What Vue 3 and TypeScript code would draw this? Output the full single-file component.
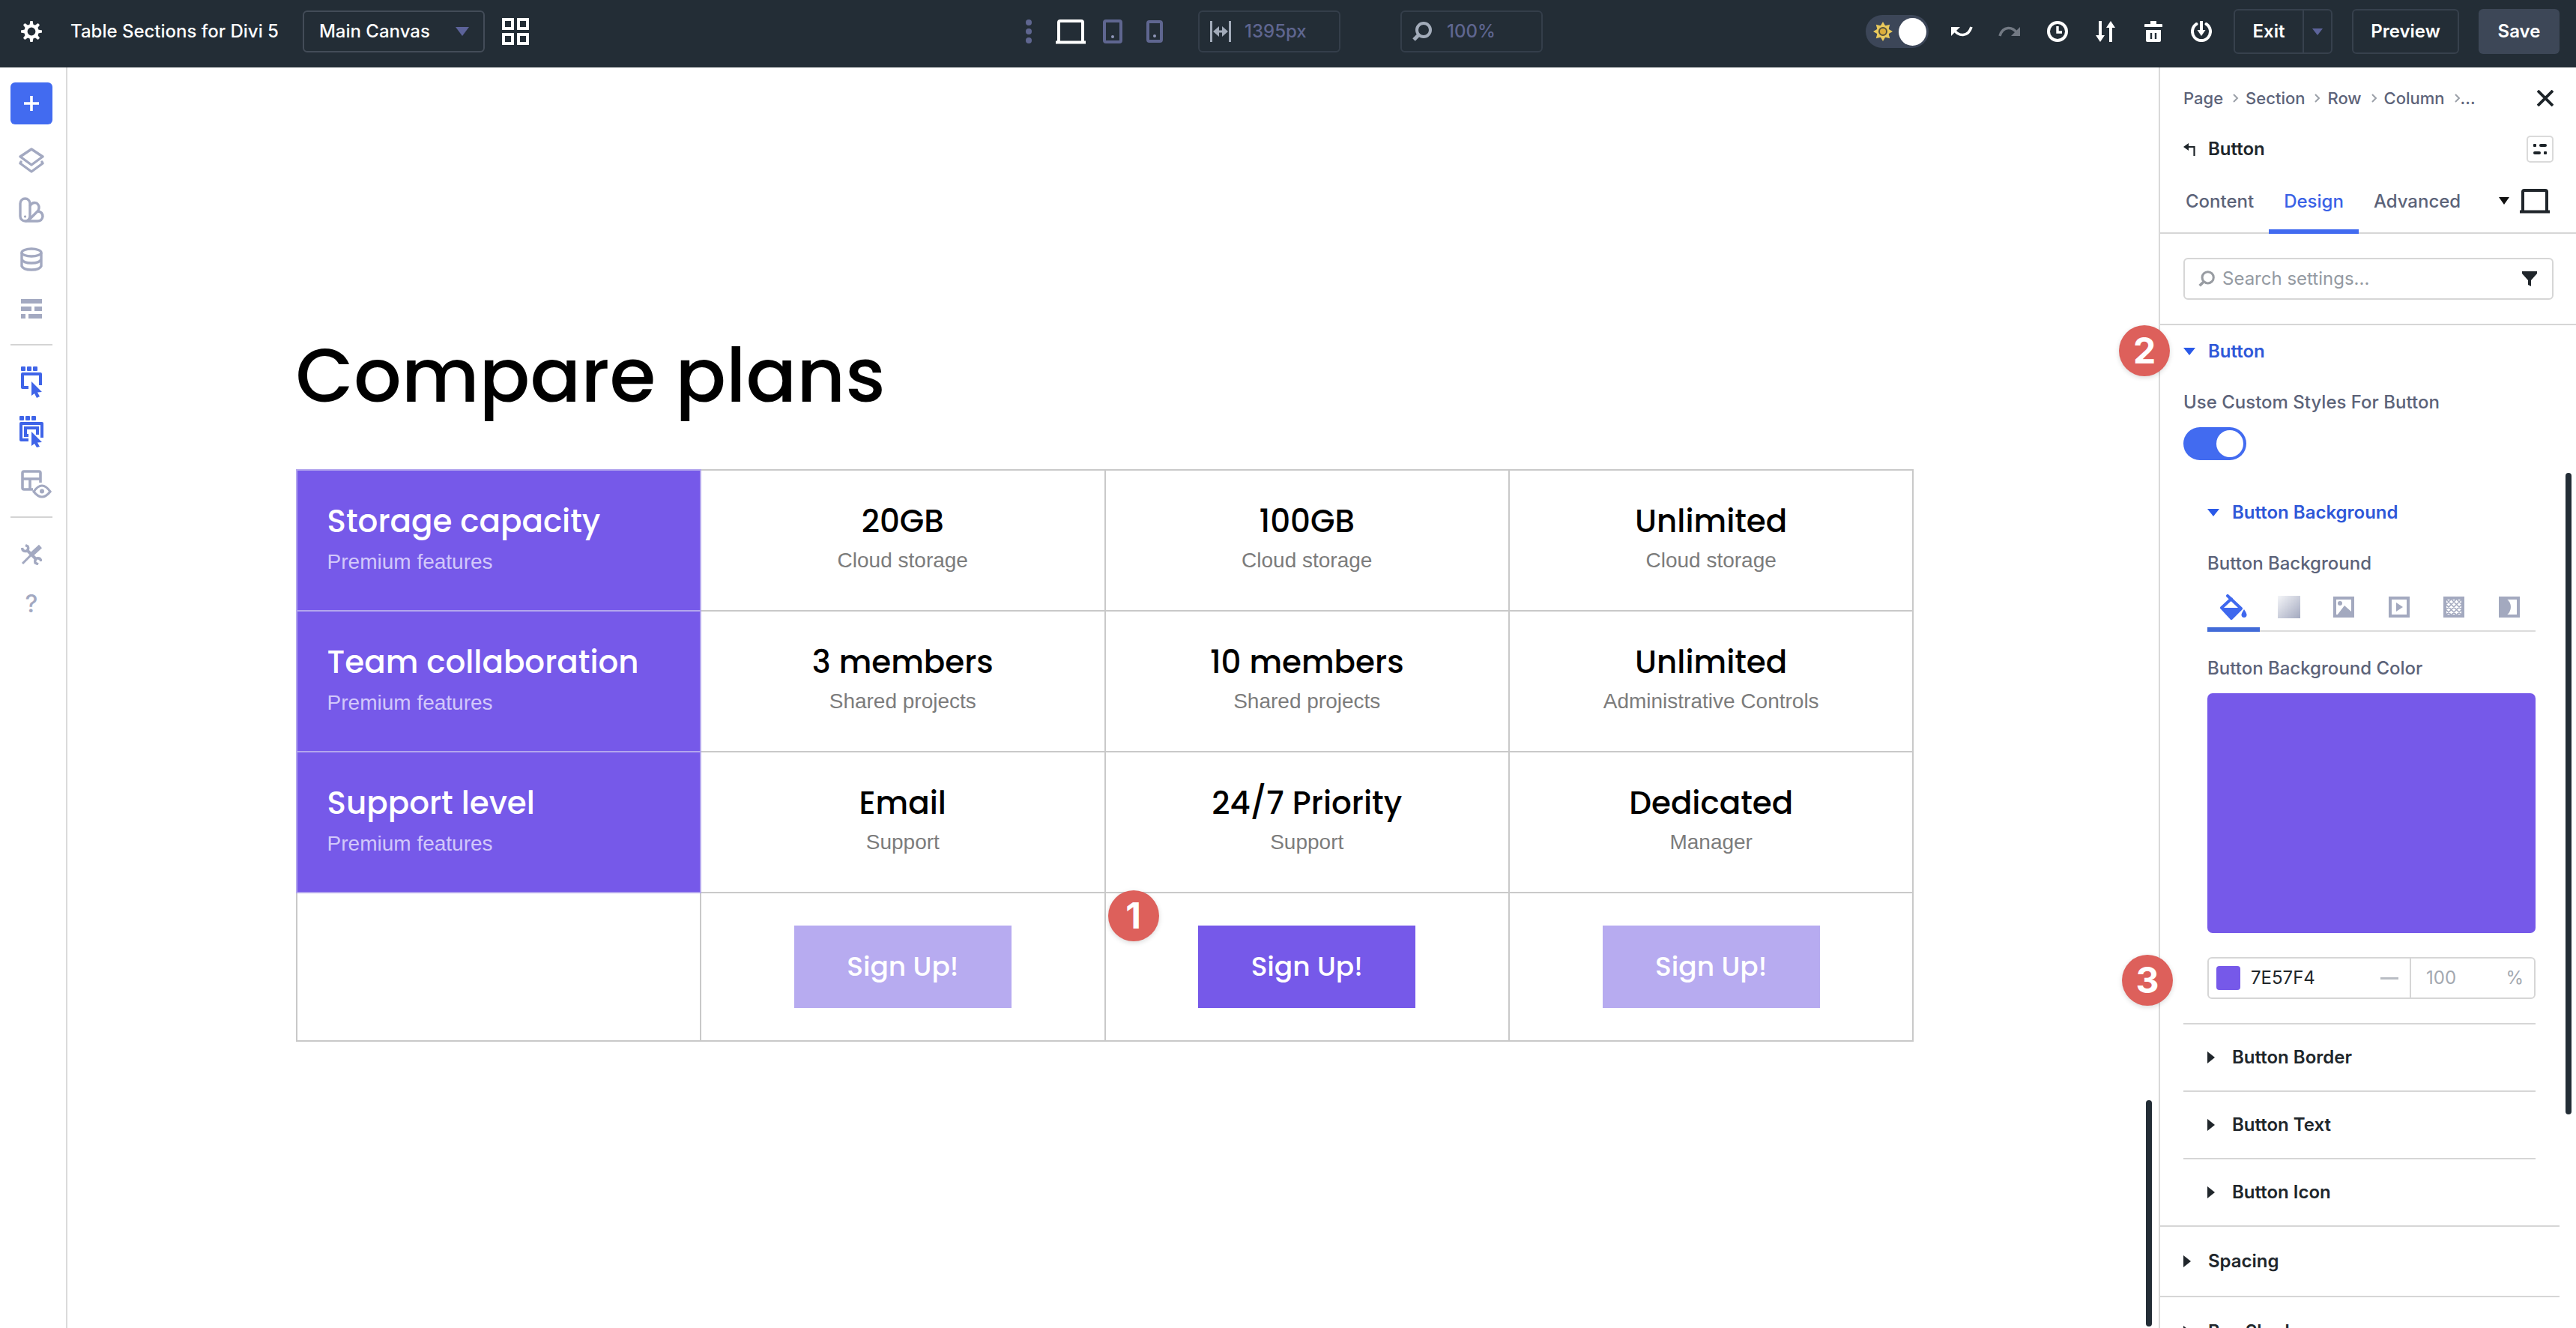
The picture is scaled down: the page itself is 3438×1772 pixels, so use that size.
<script setup lang="ts">
import { ref } from 'vue'

interface Cell {
  title: string
  note: string
}

interface PlanRow {
  feature: string
  cells: Cell[]
}

const rows: PlanRow[] = [
  {
    feature: 'Storage capacity',
    cells: [
      { title: '20GB', note: 'Cloud storage' },
      { title: '100GB', note: 'Cloud storage' },
      { title: 'Unlimited', note: 'Cloud storage' },
    ],
  },
  {
    feature: 'Team collaboration',
    cells: [
      { title: '3 members', note: 'Shared projects' },
      { title: '10 members', note: 'Shared projects' },
      { title: 'Unlimited', note: 'Administrative Controls' },
    ],
  },
  {
    feature: 'Support level',
    cells: [
      { title: 'Email', note: 'Support' },
      { title: '24/7 Priority', note: 'Support' },
      { title: 'Dedicated', note: 'Manager' },
    ],
  },
]

const crumbs: string[] = ['Page', 'Section', 'Row', 'Column']
const tabs: string[] = ['Content', 'Design', 'Advanced']
const subGroups: string[] = ['Button Border', 'Button Text', 'Button Icon']
const groups: string[] = ['Spacing', 'Box Shadow']

const activeTab = ref('Design')
const lightMode = ref(true)
const customStyles = ref(true)
const canvas = ref('Main Canvas')
const viewport = ref('1395px')
const zoom = ref('100%')
const search = ref('')
const hex = ref('7E57F4')
const opacity = ref('')
</script>

<template>
  <div class="app">
    <header class="topbar">
      <div class="top-left">
        <button class="plain" aria-label="Settings">
          <svg width="28" height="28" viewBox="0 0 28 28">
            <g fill="#fff">
              <path v-for="n in 8" :key="n" d="M11.5 5 L12.4 0 H15.6 L16.5 5 Z" :transform="`rotate(${n * 45} 14 14)`" />
            </g>
            <circle cx="14" cy="14" r="7.6" fill="none" stroke="#fff" stroke-width="4.4" />
          </svg>
        </button>
        <span class="doc-title">Table Sections for Divi 5</span>
        <div class="select-wrap">
          <select v-model="canvas" aria-label="Canvas">
            <option>Main Canvas</option>
          </select>
          <svg width="18" height="12" viewBox="0 0 18 12"><path d="M0 0H18L9 12Z" fill="#5c639a" /></svg>
        </div>
        <button class="plain" aria-label="Grid view">
          <svg width="38" height="38" viewBox="0 0 38 38" fill="none" stroke="#fff" stroke-width="4">
            <rect x="3" y="3" width="12" height="12" /><rect x="23" y="3" width="12" height="12" />
            <rect x="3" y="23" width="12" height="12" /><rect x="23" y="23" width="12" height="12" />
          </svg>
        </button>
      </div>

      <div class="top-center">
        <button class="plain slot" aria-label="More">
          <svg width="8" height="32" viewBox="0 0 8 32" fill="#5f6690"><circle cx="4" cy="4" r="4" /><circle cx="4" cy="16" r="4" /><circle cx="4" cy="28" r="4" /></svg>
        </button>
        <button class="plain slot" aria-label="Desktop">
          <svg width="40" height="34" viewBox="0 0 40 34" fill="none" stroke="#fff"><path d="M4 30V5Q4 3 6 3H34Q36 3 36 5V30" stroke-width="4" /><path d="M0 31.5H40" stroke-width="4" /></svg>
        </button>
        <button class="plain slot" aria-label="Tablet">
          <svg width="26" height="32" viewBox="0 0 26 32"><rect x="2" y="2" width="22" height="28" rx="2" fill="none" stroke="#5f6690" stroke-width="4" /><circle cx="13" cy="23" r="2" fill="#8f96b8" /></svg>
        </button>
        <button class="plain slot" aria-label="Phone">
          <svg width="22" height="30" viewBox="0 0 22 30"><rect x="2" y="2" width="18" height="26" rx="2" fill="none" stroke="#5f6690" stroke-width="4" /><circle cx="11" cy="21" r="2" fill="#8f96b8" /></svg>
        </button>
        <label class="top-field width-field">
          <svg width="28" height="28" viewBox="0 0 28 28" stroke="#a3acba" fill="#a3acba"><path d="M1.5 0V28M26.5 0V28M8 14H20" stroke-width="3" fill="none" /><path d="M4 14L12 7V21ZM24 14L16 7V21Z" stroke="none" /></svg>
          <input v-model="viewport" type="text" aria-label="Viewport width" />
        </label>
        <label class="top-field zoom-field">
          <svg width="28" height="26" viewBox="0 0 28 26" fill="none" stroke="#a3acba"><circle cx="15" cy="11" r="9" stroke-width="4" /><path d="M8 18L2 24" stroke-width="5" /></svg>
          <input v-model="zoom" type="text" aria-label="Zoom" />
        </label>
      </div>

      <div class="top-right">
        <label class="mode">
          <input v-model="lightMode" type="checkbox" aria-label="Light mode" />
          <svg width="26" height="26" viewBox="0 0 26 26">
            <g fill="#e9c95c"><path v-for="n in 8" :key="n" d="M9.5 6L13 0L16.5 6Z" :transform="`rotate(${n * 45} 13 13)`" /></g>
            <circle cx="13" cy="13" r="8.5" fill="#e9c95c" /><circle cx="13" cy="13" r="5" fill="#dcae3c" stroke="#55503c" stroke-width="2" />
          </svg>
        </label>
        <button class="plain tool" aria-label="Undo">
          <svg width="30" height="14" viewBox="0 0 30 14"><path d="M1 1V13L13 1Z" fill="#fff" /><path d="M28 1Q25 11 17 11.500Q10 12 5 5" fill="none" stroke="#fff" stroke-width="3.600" /></svg>
        </button>
        <button class="plain tool" aria-label="Redo">
          <svg width="30" height="14" viewBox="0 0 30 14"><path d="M29 1V13H17Z" fill="#727983" /><path d="M2 13Q5 3 13 2.500Q20 2 25 9" fill="none" stroke="#727983" stroke-width="3.600" /></svg>
        </button>
        <button class="plain tool" aria-label="History">
          <svg width="28" height="28" viewBox="0 0 28 28" fill="none" stroke="#fff"><circle cx="14" cy="14" r="12" stroke-width="4" /><path d="M14 7V15H20" stroke-width="3.400" /></svg>
        </button>
        <button class="plain tool" aria-label="Portability">
          <svg width="28" height="28" viewBox="0 0 28 28"><path d="M7 0V22M21 6V28" stroke="#fff" stroke-width="4" /><path d="M1 19H13L7 28ZM15 9H27L21 0Z" fill="#fff" /></svg>
        </button>
        <button class="plain tool" aria-label="Clear layout">
          <svg width="26" height="28" viewBox="0 0 26 28"><path d="M9 0H17V4H24Q25 4 25 5V8H1V5Q1 4 2 4H9ZM3 12H23V26Q23 28 21 28H5Q3 28 3 26Z" fill="#fff" /><path d="M10 16V24M16 16V24" stroke="#232d36" stroke-width="2.400" /></svg>
        </button>
        <button class="plain tool" aria-label="Save to library">
          <svg width="28" height="28" viewBox="0 0 28 28"><path d="M7.500 4A12 12 0 1 0 20.500 4" fill="none" stroke="#fff" stroke-width="4" stroke-linecap="round" /><path d="M14 0V14" stroke="#fff" stroke-width="4" /><path d="M8.500 12H19.500L14 20Z" fill="#fff" /></svg>
        </button>
        <div class="split">
          <button class="exit">Exit</button>
          <button class="exit-menu" aria-label="Exit options">
            <svg width="14" height="9" viewBox="0 0 14 9"><path d="M0 0H14L7 9Z" fill="#5c639a" /></svg>
          </button>
        </div>
        <button class="box-btn preview">Preview</button>
        <button class="box-btn save">Save</button>
      </div>
    </header>

    <div class="body">
      <nav class="sidebar" aria-label="Builder tools">
        <button class="add" aria-label="Add">
          <svg width="20" height="20" viewBox="0 0 20 20" stroke="#fff" stroke-width="3.600"><path d="M10 0V20M0 10H20" /></svg>
        </button>
        <button class="plain side" aria-label="Layers">
          <svg width="34" height="34" viewBox="0 0 34 34" fill="none" stroke="#a3a9c1" stroke-width="3.400" stroke-linejoin="round" stroke-linecap="round"><path d="M17 2L32 12L17 23L2 12Z" /><path d="M3 19L2 21L17 32L32 21L31 19" /></svg>
        </button>
        <button class="plain side" aria-label="Design presets">
          <svg width="34" height="34" viewBox="0 0 34 34" fill="none" stroke="#a3a9c1" stroke-width="3.400" stroke-linejoin="round"><rect x="2" y="2" width="13" height="30" rx="6.500" /><path d="M15 12Q18 6 24 8Q29 12 26 18L13 31" /><path d="M26 19Q32 20 32 26Q31 32 25 32H9" /><circle cx="8.500" cy="26" r="1.200" fill="#a3a9c1" stroke-width="1" /></svg>
        </button>
        <button class="plain side" aria-label="Data">
          <svg width="30" height="32" viewBox="0 0 30 32" fill="none" stroke="#a3a9c1" stroke-width="3.400"><ellipse cx="15" cy="7" rx="13" ry="5" /><path d="M2 7V25Q4 30 15 30T28 25V7M2 16Q4 21 15 21T28 16" /></svg>
        </button>
        <button class="plain side" aria-label="Structure">
          <svg width="28" height="26" viewBox="0 0 28 26" fill="#a3a9c1"><rect width="28" height="6" /><rect y="10" width="14" height="6" /><rect x="18" y="10" width="10" height="6" /><rect y="20" width="6" height="6" /><rect x="10" y="20" width="18" height="6" /></svg>
        </button>
        <hr />
        <button class="plain side" aria-label="Select element">
          <svg width="28" height="42" viewBox="0 0 28 42" fill="#3f64e8"><rect width="6" height="6" rx="1" /><rect x="8" width="6" height="6" rx="1" /><rect x="16" width="6" height="6" rx="1" /><path d="M10 28H2V10H26V25" fill="none" stroke="#3f64e8" stroke-width="4" stroke-linejoin="round" /><path d="M14 20L28 34L22 34.500L25 40L21 42L18 36L14 39Z" /></svg>
        </button>
        <button class="plain side" aria-label="Select nested element">
          <svg width="32" height="42" viewBox="0 0 32 42" fill="#3f64e8"><rect width="6" height="6" rx="1" /><rect x="8" width="6" height="6" rx="1" /><rect x="16" width="6" height="6" rx="1" /><path d="M12 32H2V10H30V29" fill="none" stroke="#3f64e8" stroke-width="4" stroke-linejoin="round" /><path d="M12 26H8V16H24V25" fill="none" stroke="#3f64e8" stroke-width="4" /><path d="M16 21L30 35L24 35.500L27 41L23 42L20 37L16 40Z" /></svg>
        </button>
        <button class="plain side" aria-label="View mode">
          <svg class="overflowing" width="28" height="34" viewBox="0 0 28 34" fill="none" stroke="#a3a9c1" stroke-width="3.600"><path d="M16 28H4Q2 28 2 26V6Q2 4 4 4H24Q26 4 26 6V19M2 14H26M12 14V28" /><path d="M17 31Q28 15 39 31Q28 45 17 31Z" fill="#fff" stroke-width="3.200" /><circle cx="28" cy="30.500" r="3" fill="#a3a9c1" stroke="none" /></svg>
        </button>
        <hr />
        <button class="plain side" aria-label="Tools">
          <svg width="28" height="28" viewBox="0 0 28 28" fill="none" stroke="#a3a9c1"><path d="M2 26L14 14" stroke-width="3" /><path d="M14 14L26 3" stroke-width="6" /><path d="M8 8L21 21" stroke-width="4" /><path d="M1.500 5Q2 10 7 9.500Q11 7 9 3L6 1.500M27 23Q26 18 21 19Q18 21 19 25L23 27" stroke-width="3.400" /></svg>
        </button>
        <button class="plain side help" aria-label="Help">?</button>
      </nav>

      <main class="canvas">
        <div class="page">
          <div class="content">
            <h1>Compare plans</h1>
            <table>
              <tbody>
                <tr v-for="row in rows" :key="row.feature" class="plan-row">
                  <th scope="row">
                    <div class="cell-title">{{ row.feature }}</div>
                    <div class="cell-note">Premium features</div>
                  </th>
                  <td v-for="(cell, i) in row.cells" :key="i">
                    <div class="cell-title">{{ cell.title }}</div>
                    <div class="cell-note">{{ cell.note }}</div>
                  </td>
                </tr>
                <tr class="action-row">
                  <td></td>
                  <td><button class="signup faded">Sign Up!</button></td>
                  <td><button class="signup">Sign Up!</button><span class="badge badge-one">1</span></td>
                  <td><button class="signup faded">Sign Up!</button></td>
                </tr>
              </tbody>
            </table>
          </div>
        </div>
        <div class="gutter canvas-gutter"><div class="thumb"></div></div>
      </main>

      <aside class="panel">
        <div class="crumb-row">
          <nav class="crumbs" aria-label="Breadcrumb">
            <template v-for="crumb in crumbs" :key="crumb">
              <a href="#">{{ crumb }}</a>
              <svg width="8" height="14" viewBox="0 0 8 14" fill="none" stroke="#9ba0a8" stroke-width="2"><path d="M1 2L6 7L1 12" /></svg>
            </template>
            <span>...</span>
          </nav>
          <button class="plain" aria-label="Close">
            <svg width="22" height="22" viewBox="0 0 22 22" stroke="#1d2429" stroke-width="3.800"><path d="M1 1L21 21M21 1L1 21" /></svg>
          </button>
        </div>

        <div class="name-row">
          <button class="plain back" aria-label="Back">
            <svg width="16" height="17" viewBox="0 0 16 17"><path d="M4 5H14.500V17" fill="none" stroke="#1d2429" stroke-width="2.200" /><path d="M0 5L7 0V10Z" fill="#1d2429" /></svg>
          </button>
          <h2>Button</h2>
          <button class="layout-btn" aria-label="Panel layout">
            <svg width="18" height="16" viewBox="0 0 18 16" fill="#1d2429"><rect y="1" width="4" height="4" rx="1" /><rect x="8" y="1" width="10" height="4" rx="2" /><rect y="11" width="10" height="4" rx="2" /><rect x="14" y="11" width="4" height="4" rx="1" /></svg>
          </button>
        </div>

        <div class="tab-row">
          <div class="tabs" role="tablist">
            <button
              v-for="tab in tabs"
              :key="tab"
              role="tab"
              class="tab"
              :class="{ active: tab === activeTab }"
              :aria-selected="tab === activeTab"
              @click="activeTab = tab"
            >{{ tab }}</button>
          </div>
          <button class="plain device" aria-label="Responsive view">
            <svg width="14" height="10" viewBox="0 0 14 10"><path d="M0 0H14L7 10Z" fill="#111" /></svg>
            <svg width="40" height="34" viewBox="0 0 40 34" fill="none" stroke="#20262b"><path d="M4 30V5Q4 3 6 3H34Q36 3 36 5V30" stroke-width="4" /><path d="M0 31.500H40" stroke-width="4" /></svg>
          </button>
        </div>

        <div class="search-row">
          <label class="search">
            <svg width="22" height="22" viewBox="0 0 26 26" fill="none" stroke="#989ca2"><circle cx="15" cy="11" r="9" stroke-width="3.600" /><path d="M8 18L2 24" stroke-width="4.400" /></svg>
            <input v-model="search" type="text" placeholder="Search settings..." aria-label="Search settings" />
            <svg width="20" height="20" viewBox="0 0 20 20"><path d="M0 0H20V3L12 12V20L8 18V12L0 3Z" fill="#20262b" /></svg>
          </label>
        </div>

        <div class="scroller">
          <span class="badge badge-two">2</span>
          <div class="settings">
            <section class="group open-group">
              <button class="group-head open">
                <svg width="16" height="10" viewBox="0 0 16 10"><path d="M0 0H16L8 10Z" fill="#2a59e8" /></svg>
                Button
              </button>
              <label class="field-label" for="custom-styles">Use Custom Styles For Button</label>
              <input id="custom-styles" v-model="customStyles" class="switch" type="checkbox" />

              <div class="subgroup">
                <button class="group-head open nested-head">
                  <svg width="16" height="10" viewBox="0 0 16 10"><path d="M0 0H16L8 10Z" fill="#2a59e8" /></svg>
                  Button Background
                </button>
                <div class="field-label">Button Background</div>
                <div class="bg-tabs">
                  <button class="bg-tab active" aria-label="Color">
                    <svg width="36" height="34" viewBox="0 0 36 34"><path d="M10 2L28 19L15 32L2 18L15 6" fill="none" stroke="#3f68ee" stroke-width="4" stroke-linejoin="round" stroke-linecap="round" /><path d="M2 18H28L15 32Z" fill="#3f68ee" /><path d="M32 20Q28 26 28.500 28Q29 31 32 31T35.500 28Q36 26 32 20Z" fill="#3f68ee" /></svg>
                  </button>
                  <button class="bg-tab" aria-label="Gradient">
                    <svg width="30" height="30" viewBox="0 0 30 30"><defs><linearGradient id="fade" x1="0" y1="0" x2="1" y2="1"><stop offset="0" stop-color="#f4f5f8" /><stop offset="1" stop-color="#a3a9bf" /></linearGradient></defs><rect width="30" height="30" fill="url(#fade)" /></svg>
                  </button>
                  <button class="bg-tab" aria-label="Image">
                    <svg width="28" height="28" viewBox="0 0 28 28"><rect x="2" y="2" width="24" height="24" fill="none" stroke="#a3a9bf" stroke-width="4" /><circle cx="9" cy="9" r="3" fill="#a3a9bf" /><path d="M5 25L15 12L24 20V26H5Z" fill="#a3a9bf" /></svg>
                  </button>
                  <button class="bg-tab" aria-label="Video">
                    <svg width="28" height="28" viewBox="0 0 28 28"><rect x="2" y="2" width="24" height="24" fill="none" stroke="#a3a9bf" stroke-width="4" /><path d="M10 8L19 14L10 20Z" fill="#a3a9bf" /></svg>
                  </button>
                  <button class="bg-tab" aria-label="Pattern">
                    <svg width="28" height="28" viewBox="0 0 28 28"><rect x="2" y="2" width="24" height="24" fill="none" stroke="#a3a9bf" stroke-width="4" /><path d="M4 10L10 4M4 17L17 4M4 24L24 4M11 24L24 11M18 24L24 18M18 4L24 10M11 4L24 17M4 4L24 24M4 11L17 24M4 18L10 24" stroke="#a3a9bf" stroke-width="1.600" /></svg>
                  </button>
                  <button class="bg-tab" aria-label="Mask">
                    <svg width="28" height="28" viewBox="0 0 28 28"><rect x="2" y="2" width="24" height="24" fill="none" stroke="#a3a9bf" stroke-width="4" /><path d="M2 2H9Q16 7 16 14T9 26H2Z" fill="#a3a9bf" /></svg>
                  </button>
                </div>
                <div class="field-label">Button Background Color</div>
                <button class="swatch" aria-label="Pick color"></button>
                <div class="color-field">
                  <span class="badge badge-three">3</span>
                  <span class="chip"></span>
                  <input v-model="hex" class="hex" type="text" aria-label="Hex color" />
                  <span class="dash"></span>
                  <label class="opacity">
                    <input v-model="opacity" type="text" placeholder="100" aria-label="Opacity" />
                    <span>%</span>
                  </label>
                </div>
              </div>

              <button v-for="name in subGroups" :key="name" class="group-head sub-head">
                <svg width="10" height="16" viewBox="0 0 10 16"><path d="M0 0L10 8L0 16Z" fill="#20262b" /></svg>
                {{ name }}
              </button>
            </section>
            <button v-for="name in groups" :key="name" class="group-head main-head">
              <svg width="10" height="16" viewBox="0 0 10 16"><path d="M0 0L10 8L0 16Z" fill="#20262b" /></svg>
              {{ name }}
            </button>
          </div>
          <div class="gutter panel-gutter"><div class="thumb"></div></div>
        </div>
      </aside>
    </div>
  </div>
</template>

<style>
body {
  margin: 0;
}
</style>

<style scoped>
* {
  box-sizing: border-box;
}

.app {
  display: flex;
  flex-direction: column;
  height: 100vh;
  overflow: hidden;
  background: #fff;
  font-family: Inter, 'Liberation Sans', sans-serif;
  font-size: 24px;
  font-weight: 500;
  line-height: 30px;
  color: #20262b;
}

svg {
  display: block;
  flex: none;
}

button,
input,
select {
  font: inherit;
  color: inherit;
}

input {
  min-width: 0;
  padding: 0;
  border: 0;
  background: none;
  outline: none;
}

button {
  display: flex;
  align-items: center;
  justify-content: center;
  padding: 0;
  border: 0;
  background: none;
  cursor: pointer;
}

/* Top bar */
.topbar {
  display: grid;
  grid-template-columns: 1fr auto 1fr;
  align-items: center;
  flex: none;
  height: 90px;
  padding: 0 22px 6px 28px;
  background: #232d36;
  color: #fff;
}

.top-left,
.top-center,
.top-right {
  display: flex;
  align-items: center;
}

.top-center {
  padding-right: 40px;
}

.top-right {
  justify-content: flex-end;
}

.doc-title {
  margin: 0 32px 0 38px;
  white-space: nowrap;
}

.select-wrap {
  display: grid;
  align-items: center;
  width: 243px;
  height: 56px;
  margin-right: 22px;
  border: 2px solid #434c58;
  border-radius: 6px;
}

.select-wrap > * {
  grid-area: 1 / 1;
}

.select-wrap select {
  width: 100%;
  height: 100%;
  padding: 0 20px;
  border: 0;
  background: transparent;
  appearance: none;
}

.select-wrap option {
  color: #20262b;
}

.select-wrap svg {
  justify-self: end;
  margin-right: 19px;
  pointer-events: none;
}

.slot {
  width: 56px;
  height: 56px;
}

.top-field {
  display: flex;
  align-items: center;
  width: 190px;
  height: 56px;
  padding-left: 14px;
  border: 2px solid #343e4a;
  border-radius: 6px;
  color: #5f6690;
}

.top-field input {
  flex: 1;
  margin-left: 18px;
}

.width-field {
  margin-left: 30px;
}

.zoom-field {
  margin-left: 80px;
}

.mode {
  display: grid;
  align-items: center;
  margin-right: 12px;
}

.mode > * {
  grid-area: 1 / 1;
}

.mode input {
  display: flex;
  align-items: center;
  justify-content: flex-start;
  width: 84px;
  height: 44px;
  margin: 0;
  padding: 0 3px;
  border-radius: 22px;
  background: #3c4658;
  appearance: none;
}

.mode input::before {
  width: 37px;
  height: 37px;
  border-radius: 50%;
  background: #fff;
  content: '';
}

.mode input:checked {
  justify-content: flex-end;
}

.mode svg {
  margin-left: 10px;
}

.tool {
  width: 64px;
  height: 56px;
}

.split {
  display: flex;
  height: 60px;
  margin: 0 26px 0 11px;
  border: 2px solid #37414d;
  border-radius: 6px;
}

.exit {
  width: 92px;
  border-right: 2px solid #37414d;
}

.exit-menu {
  width: 36px;
}

.box-btn,
.exit {
  font-weight: 600;
}

.box-btn {
  height: 60px;
  border-radius: 6px;
}

.preview {
  width: 143px;
  margin-right: 26px;
  border: 2px solid #37414d;
}

.save {
  width: 108px;
  background: #3d4757;
}

/* Workspace */
.body {
  display: flex;
  flex: 1;
  min-height: 0;
}

.sidebar {
  display: flex;
  flex-direction: column;
  align-items: center;
  flex: none;
  width: 90px;
  padding: 20px 4px 0 0;
  border-right: 2px solid #dadada;
}

.add {
  flex: none;
  width: 56px;
  height: 56px;
  margin-bottom: 15px;
  border-radius: 6px;
  background: #426bf0;
}

.side {
  flex: none;
  width: 84px;
  height: 66px;
}

.overflowing {
  overflow: visible;
}

.help {
  font-size: 32px;
  color: #a3a9c1;
}

.sidebar hr {
  width: 56px;
  height: 2px;
  margin: 14px 0 16px;
  border: 0;
  background: #d4d4d4;
}

.canvas {
  display: flex;
  flex: 1;
  min-width: 0;
}

.page {
  flex: 1;
  padding-top: 336px;
}

.content {
  width: 78%;
  margin: 0 auto;
}

.page h1,
.cell-title,
.signup {
  font-family: Poppins, Inter, sans-serif;
}

.page h1 {
  margin: 0 0 50px;
  font-size: 100px;
  font-weight: 500;
  line-height: 150px;
  color: #000;
}

table {
  width: 100%;
  border-collapse: collapse;
  table-layout: fixed;
}

th,
td {
  padding: 0;
  border: 2px solid #c9c9c9;
  text-align: center;
  vertical-align: top;
}

th {
  padding-left: 40px;
  border-color: #b3a6ee;
  background: #7659e9;
  color: #fff;
  text-align: left;
}

.plan-row {
  height: 188px;
}

.plan-row th,
.plan-row td {
  padding-top: 38px;
}

.action-row {
  height: 198px;
}

.action-row td {
  position: relative;
  vertical-align: middle;
}

.cell-title {
  font-size: 42px;
  font-weight: 500;
  line-height: 60px;
}

td .cell-title {
  color: #000;
}

.cell-note {
  font-family: 'Liberation Sans', Arial, sans-serif;
  font-size: 28px;
  font-weight: 400;
  line-height: 44px;
  color: #7c7c7c;
}

th .cell-note {
  line-height: 48px;
  color: #d2c8fa;
}

.signup {
  width: 290px;
  height: 110px;
  margin: 0 auto;
  background: #7659e9;
  color: #fff;
  font-size: 36px;
}

.signup.faded {
  background: #b7abf0;
}

.badge {
  position: absolute;
  z-index: 2;
  display: grid;
  place-items: center;
  width: 68px;
  height: 68px;
  border-radius: 50%;
  background: #dd605b;
  box-shadow: 0 2px 6px rgba(0, 0, 0, 0.15);
  color: #fff;
  font-size: 48px;
  font-weight: 700;
  line-height: 68px;
}

.badge-one {
  top: -4px;
  left: 3px;
}

.badge-two {
  top: 0;
  left: -55px;
}

.badge-three {
  top: -5px;
  left: -116px;
}

.gutter {
  display: flex;
  flex: none;
  flex-direction: column;
  width: 22px;
}

.thumb {
  width: 8px;
  border-radius: 4px;
  background: #232d36;
}

.canvas-gutter {
  justify-content: flex-end;
  padding: 0 0 2px 5px;
}

.canvas-gutter .thumb {
  height: 18%;
}

/* Settings panel */
.panel {
  display: flex;
  flex-direction: column;
  flex: none;
  width: 557px;
  border-left: 2px solid #d9d9d9;
}

.crumb-row,
.name-row,
.tab-row {
  display: flex;
  align-items: center;
  flex: none;
}

.crumb-row {
  justify-content: space-between;
  height: 82px;
  padding: 0 30px 0 31px;
}

.crumbs {
  display: flex;
  align-items: center;
  font-size: 22px;
  color: #5c6379;
}

.crumbs a {
  color: inherit;
  text-decoration: none;
}

.crumbs svg {
  margin: 0 9px 0 13px;
}

.crumbs svg:last-of-type {
  margin-right: 0;
}

.name-row {
  height: 54px;
  padding: 0 30px 0 31px;
}

.back {
  margin-right: 17px;
}

.name-row h2 {
  flex: 1;
  margin: 0;
  font-size: 24px;
  font-weight: 600;
}

.layout-btn {
  width: 36px;
  height: 36px;
  border: 2px solid #dadada;
  border-radius: 5px;
}

.tab-row {
  justify-content: space-between;
  height: 86px;
  padding: 0 35px 0 14px;
  border-bottom: 2px solid #d6d6d6;
}

.tabs {
  display: flex;
  align-self: stretch;
}

.tab {
  height: 86px;
  padding: 0 20px;
  border-top: 6px solid transparent;
  border-bottom: 6px solid transparent;
  color: #5c6379;
}

.tab.active {
  border-bottom-color: #426bf0;
  color: #3a62e6;
}

.device {
  gap: 14px;
}

.search-row {
  flex: none;
  padding: 32px 30px 32px 31px;
  border-bottom: 2px solid #d6d6d6;
}

.search {
  display: flex;
  align-items: center;
  gap: 10px;
  height: 56px;
  padding: 0 20px 0 18px;
  border: 2px solid #d6d6d6;
  border-radius: 6px;
}

.search input {
  flex: 1;
  font-weight: 400;
}

.search input::placeholder {
  color: #949aa2;
  opacity: 1;
}

.scroller {
  position: relative;
  display: flex;
  flex: 1;
  min-height: 0;
}

.settings {
  flex: 1;
  min-width: 0;
}

.group-head {
  justify-content: flex-start;
  width: 100%;
  font-weight: 600;
}

.open-group {
  padding: 0 32px 0 31px;
  border-bottom: 2px solid #d6d6d6;
}

.group-head.open {
  gap: 17px;
  height: 70px;
  color: #2f58d8;
}

.field-label {
  display: block;
  color: #5c6379;
}

.open-group > .field-label {
  margin-top: 18px;
}

.switch {
  display: flex;
  align-items: center;
  width: 84px;
  height: 44px;
  margin: 18px 0 35px;
  padding: 0 4px;
  border-radius: 22px;
  background: #426bf0;
  appearance: none;
}

.switch::before {
  width: 36px;
  height: 36px;
  border-radius: 50%;
  background: #fff;
  content: '';
}

.switch:checked {
  justify-content: flex-end;
}

.subgroup {
  padding: 0 0 32px 32px;
}

.nested-head {
  margin-bottom: 18px;
}

.bg-tabs {
  display: flex;
  justify-content: space-between;
  height: 76px;
  margin-bottom: 34px;
  border-bottom: 2px solid #dcdcdc;
}

.bg-tab {
  width: 70px;
  height: 76px;
  padding-top: 16px;
  border-bottom: 6px solid transparent;
}

.bg-tab.active {
  border-bottom-color: #426bd8;
}

.swatch {
  width: 100%;
  height: 320px;
  margin: 18px 0 32px;
  border-radius: 7px;
  background: #7659e9;
}

.color-field {
  position: relative;
  display: flex;
  align-items: center;
  height: 56px;
  padding-left: 10px;
  border: 2px solid #d6d6d6;
  border-radius: 6px;
}

.chip {
  flex: none;
  width: 32px;
  height: 32px;
  margin-right: 14px;
  border-radius: 4px;
  background: #7659e9;
}

.hex {
  flex: 1;
  font-weight: 400;
}

.dash {
  flex: none;
  width: 24px;
  height: 3px;
  margin-right: 15px;
  background: #b9bdc4;
}

.opacity {
  display: flex;
  align-items: center;
  flex: none;
  width: 166px;
  height: 52px;
  padding: 0 14px 0 20px;
  border-left: 2px solid #d6d6d6;
  color: #a3a8b0;
  font-weight: 400;
}

.opacity input {
  flex: 1;
}

.opacity input::placeholder {
  color: #a3a8b0;
  opacity: 1;
}

.sub-head {
  gap: 23px;
  height: 90px;
  padding-left: 32px;
  border-top: 2px solid #d6d6d6;
}

.main-head {
  gap: 23px;
  height: 94px;
  padding-left: 31px;
  border-bottom: 2px solid #d6d6d6;
}

.panel-gutter {
  padding-left: 8px;
}

.panel-gutter .thumb {
  flex: none;
  height: 64%;
  margin-top: 197px;
}
</style>
